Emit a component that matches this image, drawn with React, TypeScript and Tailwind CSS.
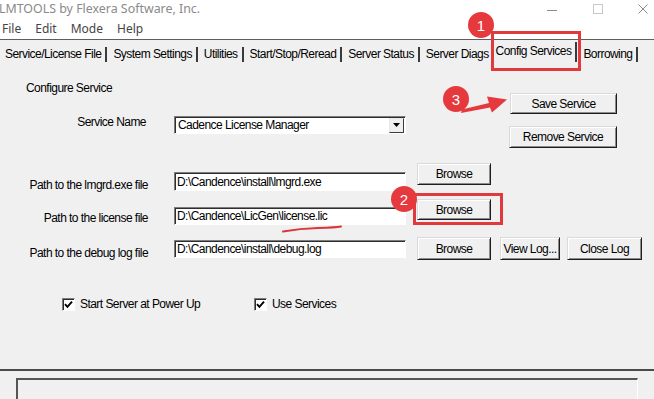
import React from "react";

const UI = "font-['Liberation_Sans',Arial,sans-serif] text-[12px] tracking-[-0.55px]";

function Btn({ className = "", children }: { className?: string; children: React.ReactNode }) {
  return (
    <div
      className={`flex items-center justify-center bg-[#f0f0f0] border border-t-[#dadada] border-l-[#dadada] border-r-[#1e1e1e] border-b-[#1e1e1e] shadow-[inset_1px_1px_0_#ffffff,inset_-1px_-1px_0_#8c8c8c] text-black leading-none whitespace-nowrap ${className}`}
    >
      {children}
    </div>
  );
}

function Field({ className = "", children }: { className?: string; children?: React.ReactNode }) {
  return (
    <div
      className={`bg-white border border-t-[#7c7c7c] border-l-[#7c7c7c] border-r-[#ffffff] border-b-[#ffffff] shadow-[inset_1px_1px_0_#2e2e2e] flex items-center pl-[2px] text-black leading-none whitespace-nowrap overflow-hidden ${className}`}
    >
      {children}
    </div>
  );
}

function Check() {
  return (
    <div className="w-[13px] h-[13px] bg-white border border-t-[#7c7c7c] border-l-[#7c7c7c] border-r-white border-b-white shadow-[inset_1px_1px_0_#2e2e2e] flex items-center justify-center">
      <svg width="9" height="9" viewBox="0 0 9 9">
        <path d="M1 4.2 L3.4 6.8 L8 1.6" fill="none" stroke="#000" strokeWidth="1.9" />
      </svg>
    </div>
  );
}

function Tab({ label, first = false }: { label: string; first?: boolean }) {
  return (
    <div className="flex items-end h-full shrink-0">
      <span className={`leading-[14px] pb-[1px] pr-[4px] whitespace-nowrap ${first ? "pl-[5px]" : "pl-[6px]"}`}>{label}</span>
      <div className="w-[2px] h-[15px] bg-[#3a3a3a]" />
    </div>
  );
}

function Badge({ n, className }: { n: string; className: string }) {
  return (
    <div
      className={`absolute rounded-full bg-[#e5393e] text-white flex items-center justify-center text-[15px] tracking-normal leading-none font-['Liberation_Sans',sans-serif] ${className}`}
    >
      {n}
    </div>
  );
}

export default function App() {
  return (
    <div className={`relative w-[654px] h-[399px] overflow-hidden bg-[#f0f0f0] flex flex-col text-black ${UI}`}>
      {/* title bar */}
      <div className="h-[18px] bg-white flex items-center justify-between shrink-0 tracking-normal">
        <span className="text-[12.4px] leading-none text-[#8a8a8a] font-['Noto_Sans','Noto_Sans_CJK_SC',sans-serif] -ml-[1px] pt-[1px] whitespace-nowrap">
          LMTOOLS by Flexera Software, Inc.
        </span>
        <div className="flex items-center pr-[6px] gap-[35px]">
          <svg width="11" height="10" viewBox="0 0 11 10">
            <path d="M0 6.5 H10" stroke="#8a8a8a" strokeWidth="1" />
          </svg>
          <svg width="10" height="10" viewBox="0 0 10 10">
            <rect x="0.5" y="0.5" width="9" height="9" fill="none" stroke="#c8c8c8" strokeWidth="1" />
          </svg>
          <svg width="10" height="10" viewBox="0 0 10 10">
            <path d="M0.5 0.5 L9.5 9.5 M9.5 0.5 L0.5 9.5" stroke="#8a8a8a" strokeWidth="1" />
          </svg>
        </div>
      </div>

      {/* menu bar */}
      <div className="h-[21px] bg-white flex items-center pl-[2px] gap-[14px] text-[12px] tracking-normal text-[#444444] font-['Noto_Sans','Noto_Sans_CJK_SC',sans-serif] shrink-0">
        <span>File</span>
        <span>Edit</span>
        <span>Mode</span>
        <span>Help</span>
      </div>
      <div className="h-[1px] bg-[#5e5e5e] shrink-0" />

      {/* tabs */}
      <div className="h-[22px] flex shrink-0">
        <Tab label="Service/License File" first />
        <Tab label="System Settings" />
        <Tab label="Utilities" />
        <Tab label="Start/Stop/Reread" />
        <Tab label="Server Status" />
        <div className="flex items-end h-full shrink-0">
          <span className="leading-[14px] pb-[1px] pl-[6px] pr-[3px] whitespace-nowrap">Server Diags</span>
        </div>
        <div className="self-end h-[20px] flex items-center border-l border-white border-r-2 border-r-[#3a3a3a] pl-[3px] pr-[4px] shrink-0">
          <span className="leading-[14px] pb-[2px] whitespace-nowrap">Config Services</span>
        </div>
        <Tab label="Borrowing" />
      </div>

      {/* content */}
      <div className="flex flex-col flex-1">
        {/* top block */}
        <div className="h-[101px] flex shrink-0">
          <div className="w-[406px] flex flex-col">
            <div className="pl-[26px] pt-[19px] leading-[14px]">Configure Service</div>
            <div className="flex items-start mt-[21px]">
              <div className="w-[146px] text-right leading-[14px] -mt-[1px]">Service Name</div>
              <div className="ml-[28px] w-[232px] h-[18px] bg-white border border-t-[#7c7c7c] border-l-[#7c7c7c] border-r-white border-b-white shadow-[inset_1px_1px_0_#2e2e2e] flex items-center">
                <span className="flex-1 pl-[3px] leading-none whitespace-nowrap">Cadence License Manager</span>
                <div className="w-[15px] h-[15px] mr-[1px] bg-[#f0f0f0] border border-t-[#e8e8e8] border-l-[#e8e8e8] border-r-[#3a3a3a] border-b-[#3a3a3a] flex items-center justify-center">
                  <svg width="7" height="4" viewBox="0 0 7 4">
                    <path d="M0 0 H7 L3.5 4 Z" fill="#000" />
                  </svg>
                </div>
              </div>
            </div>
          </div>
          <div className="ml-[104px] pt-[31px] flex flex-col">
            <Btn className="w-[107px] h-[21px]">Save Service</Btn>
            <Btn className="w-[108px] h-[22px] mt-[12px] -ml-[1px]">Remove Service</Btn>
          </div>
        </div>

        {/* path rows */}
        <div className="h-[36px] flex items-start shrink-0">
          <div className="w-[148px] text-right leading-[14px] mt-[15px] whitespace-nowrap">Path to the lmgrd.exe file</div>
          <Field className="ml-[26px] mt-[9px] w-[232px] h-[19px]">D:\Candence\install\lmgrd.exe</Field>
          <Btn className="ml-[11px] w-[74px] h-[22px]">Browse</Btn>
        </div>
        <div className="h-[38px] flex items-start shrink-0">
          <div className="w-[148px] text-right leading-[14px] mt-[12px] whitespace-nowrap">Path to the license file</div>
          <Field className="ml-[26px] mt-[8px] w-[232px] h-[18px]">D:\Candence\LicGen\license.lic</Field>
          <Btn className="ml-[11px] w-[74px] h-[21px]">Browse</Btn>
        </div>
        <div className="h-[23px] flex items-start shrink-0">
          <div className="w-[148px] text-right leading-[14px] mt-[9px] whitespace-nowrap">Path to the debug log file</div>
          <Field className="ml-[26px] mt-[3px] w-[232px] h-[18px]">D:\Candence\install\debug.log</Field>
          <Btn className="ml-[11px] w-[74px] h-[23px]">Browse</Btn>
          <Btn className="ml-[9px] w-[60px] h-[23px]">View Log...</Btn>
          <Btn className="ml-[7px] w-[75px] h-[23px]">Close Log</Btn>
        </div>

        {/* checkboxes */}
        <div className="mt-[37px] flex items-center h-[14px] pl-[62px] shrink-0">
          <div className="w-[192px] flex items-center">
            <Check />
            <span className="ml-[5px] leading-[14px] whitespace-nowrap">Start Server at Power Up</span>
          </div>
          <div className="flex items-center">
            <Check />
            <span className="ml-[5px] leading-[14px] whitespace-nowrap">Use Services</span>
          </div>
        </div>

        {/* status area */}
        <div className="mt-auto h-[30px] shrink-0 flex flex-col">
          <div className="h-[2px] bg-[#4a4a4a]" />
          <div className="mt-[7px] ml-[16px] w-[622px] flex-1 border-t-2 border-l-2 border-[#555555] border-r border-r-white" />
        </div>
      </div>

      {/* annotations */}
      <div className="absolute left-[491px] top-[31px] w-[90px] h-[40px] border-[3px] border-[#e0393e]" />
      <Badge n="1" className="left-[468px] top-[12px] w-[26px] h-[26px]" />
      <div className="absolute left-[413px] top-[193px] w-[90px] h-[32px] border-[3px] border-[#e0393e]" />
      <Badge n="2" className="left-[391px] top-[186px] w-[26px] h-[26px]" />
      <Badge n="3" className="left-[443px] top-[86px] w-[26px] h-[26px]" />
      <svg className="absolute left-[440px] top-[85px]" width="72" height="35" viewBox="440 85 72 35">
        <polygon points="461,113 462,109.5 489,103 487,96.5 507,99.5 492,112.5 490,107.5" fill="#e5393e" />
      </svg>
      <svg className="absolute left-[280px] top-[220px]" width="66" height="16" viewBox="280 220 66 16">
        <path d="M283 231.5 Q300 228.5 318 228 T341 226.5" fill="none" stroke="#d9363b" strokeWidth="2" strokeLinecap="round" />
      </svg>
    </div>
  );
}
